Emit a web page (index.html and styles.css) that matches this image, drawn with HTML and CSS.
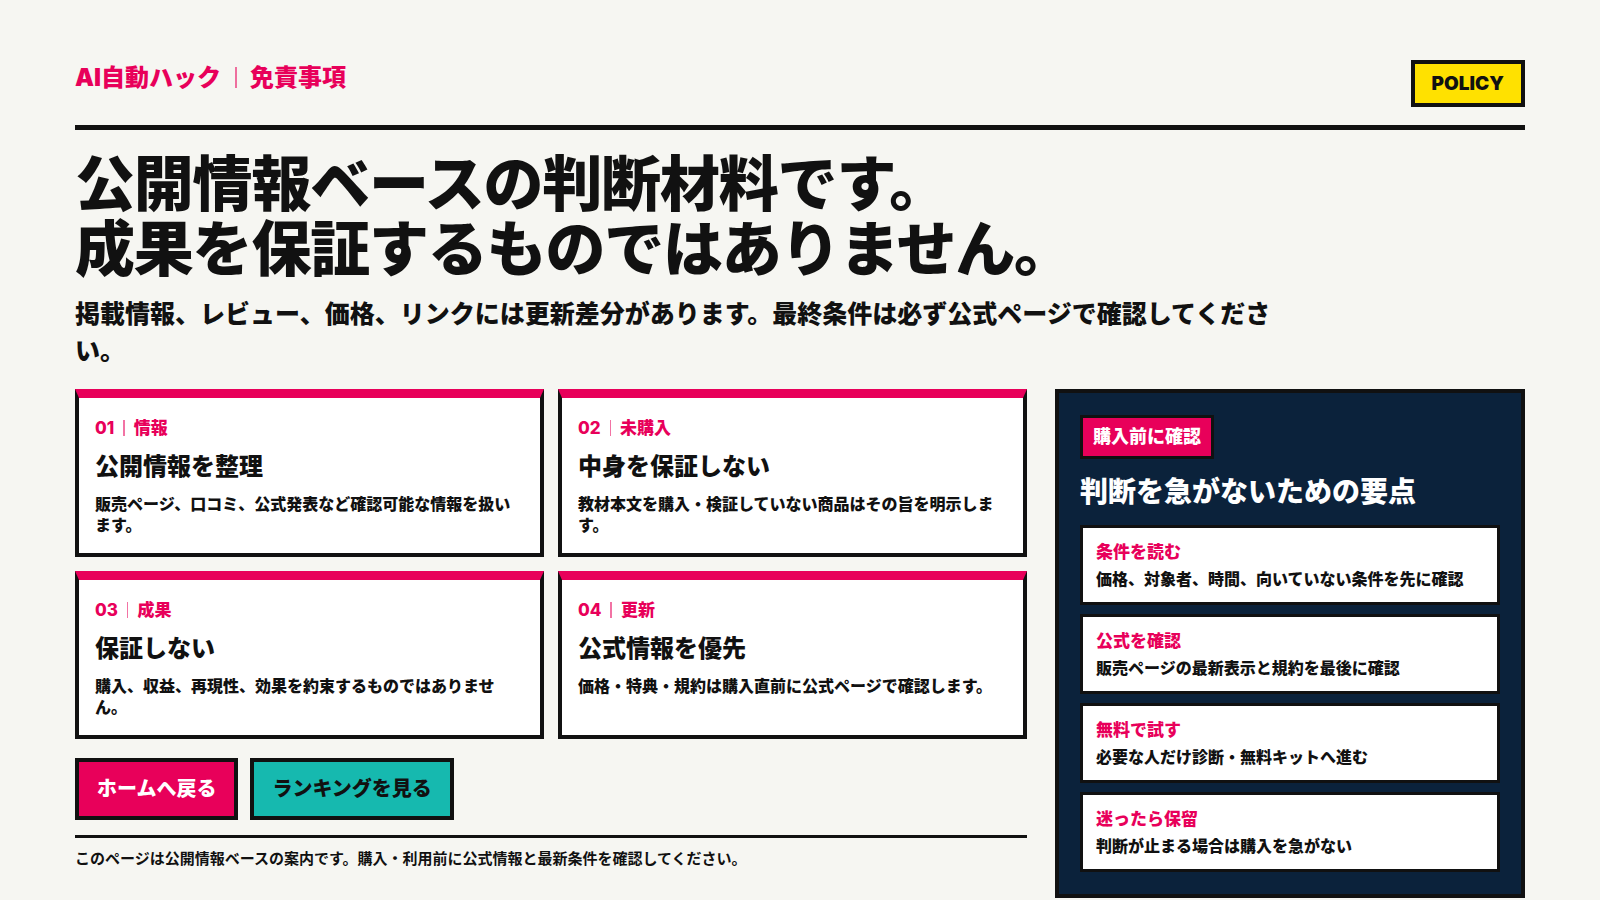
FILE: index.html
```html
<!DOCTYPE html>
<html lang="ja">
<head>
<meta charset="utf-8">
<title>AI自動ハック｜免責事項</title>
<link rel="stylesheet" href="styles.css">
</head>
<body>
<div class="page">
  <header class="top">
    <div class="brand">AI自動ハック<span class="sep"></span>免責事項</div>
    <a class="policy" href="#">POLICY</a>
  </header>

  <h1 class="headline">公開情報ベースの判断材料です。<br>成果を保証するものではありません。</h1>
  <p class="lead">掲載情報、レビュー、価格、リンクには更新差分があります。最終条件は必ず公式ページで確認してください。</p>

  <div class="layout">
    <div class="main">
      <div class="cards">
        <section class="card">
          <div class="card-label">01<span class="sep"></span>情報</div>
          <h2 class="card-title">公開情報を整理</h2>
          <p class="card-text">販売ページ、口コミ、公式発表など確認可能な情報を扱います。</p>
        </section>
        <section class="card">
          <div class="card-label">02<span class="sep"></span>未購入</div>
          <h2 class="card-title">中身を保証しない</h2>
          <p class="card-text">教材本文を購入・検証していない商品はその旨を明示します。</p>
        </section>
        <section class="card">
          <div class="card-label">03<span class="sep"></span>成果</div>
          <h2 class="card-title">保証しない</h2>
          <p class="card-text">購入、収益、再現性、効果を約束するものではありません。</p>
        </section>
        <section class="card">
          <div class="card-label">04<span class="sep"></span>更新</div>
          <h2 class="card-title">公式情報を優先</h2>
          <p class="card-text">価格・特典・規約は購入直前に公式ページで確認します。</p>
        </section>
      </div>

      <div class="actions">
        <a class="btn btn-pink" href="#">ホームへ戻る</a>
        <a class="btn btn-teal" href="#">ランキングを見る</a>
      </div>

      <p class="note">このページは公開情報ベースの案内です。購入・利用前に公式情報と最新条件を確認してください。</p>
    </div>

    <aside class="panel">
      <span class="badge">購入前に確認</span>
      <h2 class="panel-title">判断を急がないための要点</h2>
      <div class="checks">
        <div class="check">
          <div class="check-label">条件を読む</div>
          <div class="check-text">価格、対象者、時間、向いていない条件を先に確認</div>
        </div>
        <div class="check">
          <div class="check-label">公式を確認</div>
          <div class="check-text">販売ページの最新表示と規約を最後に確認</div>
        </div>
        <div class="check">
          <div class="check-label">無料で試す</div>
          <div class="check-text">必要な人だけ診断・無料キットへ進む</div>
        </div>
        <div class="check">
          <div class="check-label">迷ったら保留</div>
          <div class="check-text">判断が止まる場合は購入を急がない</div>
        </div>
      </div>
    </aside>
  </div>
</div>
</body>
</html>
```

FILE: styles.css
```css
* { box-sizing: border-box; }

body {
  margin: 0;
  background: #f6f6f2;
  color: #111;
  font-family: Inter, "Noto Sans CJK JP", sans-serif;
}

.page {
  width: 1450px;
  margin: 0 auto;
  padding-top: 60px;
}

.top {
  display: flex;
  justify-content: space-between;
  align-items: flex-start;
  padding-bottom: 18px;
  border-bottom: 5px solid #111;
}

.brand {
  margin-top: 3px;
  display: flex;
  align-items: center;
  font-size: 24px;
  line-height: 29px;
  font-weight: 900;
  color: #e8005a;
}

.brand .sep {
  width: 2px;
  height: 21px;
  background: rgba(232, 0, 90, 0.55);
  margin: 0 13px 0 14px;
}

.policy {
  display: block;
  border: 4px solid #111;
  background: #ffe100;
  color: #111;
  text-decoration: none;
  font-size: 19px;
  line-height: 23px;
  font-weight: 900;
  padding: 8px 17px;
}

.headline {
  margin: 22px 0 0;
  font-size: 60px;
  line-height: 65px;
  font-weight: 900;
  letter-spacing: -0.02em;
}

.lead {
  margin: 14px 0 0;
  max-width: 1200px;
  font-size: 25px;
  line-height: 37px;
  font-weight: 900;
}

.layout {
  display: grid;
  grid-template-columns: 952px 1fr;
  gap: 28px;
  margin-top: 19px;
  align-items: start;
}

.cards {
  display: grid;
  grid-template-columns: 1fr 1fr;
  gap: 14px;
}

.card {
  background: #fff;
  border: 4px solid #111;
  border-top: 9px solid #e8005a;
  padding: 19px 16px 17px;
}

.card-label {
  display: flex;
  align-items: center;
  font-size: 17px;
  line-height: 22px;
  font-weight: 800;
  color: #e8005a;
}

.card-label .sep {
  width: 1.5px;
  height: 16px;
  background: rgba(232, 0, 90, 0.55);
  margin: 0 9px;
}

.card-title {
  margin: 11px 0 0;
  font-size: 24px;
  line-height: 34px;
  font-weight: 800;
}

.card-text {
  margin: 10px 0 0;
  font-size: 16px;
  line-height: 21px;
  font-weight: 800;
}

.actions {
  display: flex;
  gap: 12px;
  margin-top: 19px;
}

.btn {
  display: block;
  border: 4px solid #111;
  padding: 15px 18px;
  font-size: 20px;
  line-height: 24px;
  font-weight: 900;
  text-decoration: none;
}

.btn-pink {
  background: #e8005a;
  color: #fff;
}

.btn-teal {
  background: #16b9af;
  color: #111;
}

.note {
  margin: 15px 0 0;
  border-top: 3px solid #111;
  padding-top: 10px;
  font-size: 15px;
  line-height: 22px;
  font-weight: 700;
}

.panel {
  background: #0b223b;
  border: 4px solid #111;
  padding: 22px 21px;
}

.badge {
  display: inline-block;
  background: #e8005a;
  border: 3px solid #111;
  color: #fff;
  font-size: 18px;
  line-height: 26px;
  font-weight: 900;
  padding: 6px 10px;
}

.panel-title {
  margin: 15px 0 15px;
  color: #fff;
  font-size: 28px;
  line-height: 36px;
  font-weight: 900;
}

.checks {
  display: flex;
  flex-direction: column;
  gap: 9px;
}

.check {
  background: #fff;
  border: 3px solid #111;
  padding: 12px 13px;
}

.check-label {
  font-size: 17px;
  line-height: 24px;
  font-weight: 800;
  color: #e8005a;
}

.check-text {
  margin-top: 5px;
  font-size: 16px;
  line-height: 21px;
  font-weight: 800;
}
```
